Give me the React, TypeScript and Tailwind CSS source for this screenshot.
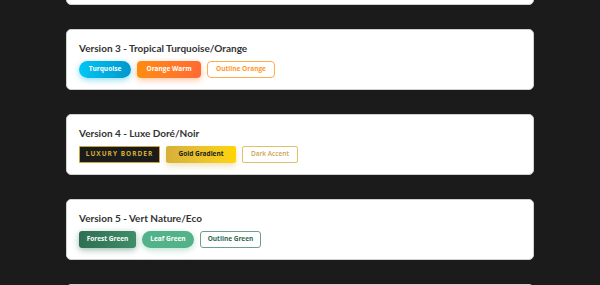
const font = { fontFamily: '"Open Sans", "Noto Sans", sans-serif' };
const titleFont = { fontFamily: 'Lato, "Open Sans", sans-serif' };

function Card({ title, children }: { title: string; children: React.ReactNode }) {
  return (
    <div className="bg-white rounded-[5px] border border-[#d0d0d0] px-[12px] pt-[11px] h-[61px]">
      <h3 className="text-[10px] leading-[14px] font-bold text-[#333333]" style={titleFont}>
        {title}
      </h3>
      <div className="flex gap-[6px] mt-[6px]">{children}</div>
    </div>
  );
}

const btn = "h-[17px] flex items-center justify-center text-[6.5px] font-bold leading-none";

export default function App() {
  return (
    <div className="h-[285px] bg-[#1b1b1b] overflow-hidden" style={font}>
      <div className="w-[468px] mx-auto -mt-[56px] flex flex-col gap-[24px]">
        <Card title="Version 2 - Bleu Océan">
          <button className={`${btn} px-[11px] rounded-[3px] bg-[#1e6fd9] text-white`}>Ocean Blue</button>
        </Card>

        <Card title="Version 3 - Tropical Turquoise/Orange">
          <button className={`${btn} w-[52px] rounded-full bg-gradient-to-r from-[#00c6f5] to-[#0098cc] text-white shadow-[0_2px_6px_rgba(0,180,230,0.45)]`}>
            Turquoise
          </button>
          <button className={`${btn} w-[64px] rounded-[4px] bg-gradient-to-r from-[#ff8c0a] to-[#ff6a33] text-white shadow-[0_2px_6px_rgba(255,120,40,0.45)]`}>
            Orange Warm
          </button>
          <button className={`${btn} w-[68px] rounded-[4px] border border-[#ffae4a] bg-white text-[#ff9a2a]`}>
            Outline Orange
          </button>
        </Card>

        <Card title="Version 4 - Luxe Doré/Noir">
          <button className={`${btn} w-[81px] rounded-[1px] border border-[#c9a43a] bg-[#1b1b1b] text-[#d4af37] tracking-[1px] uppercase`}>
            Luxury Border
          </button>
          <button className={`${btn} w-[70px] rounded-[2px] bg-gradient-to-r from-[#d6b03a] to-[#ffd500] text-[#1b1b1b] shadow-[0_3px_6px_rgba(212,175,55,0.35)]`}>
            Gold Gradient
          </button>
          <button className={`${btn} w-[56px] rounded-[2px] border border-[#e0c06a] bg-white text-[#c8a552] font-semibold`}>
            Dark Accent
          </button>
        </Card>

        <Card title="Version 5 - Vert Nature/Eco">
          <button className={`${btn} w-[57px] rounded-[3px] bg-gradient-to-r from-[#2e6f52] to-[#3f8d68] text-white shadow-[0_2px_6px_rgba(45,106,79,0.45)]`}>
            Forest Green
          </button>
          <button className={`${btn} w-[52px] rounded-full bg-[#52b38a] text-white shadow-[0_2px_6px_rgba(82,179,138,0.4)]`}>
            Leaf Green
          </button>
          <button className={`${btn} w-[61px] rounded-[3px] border border-[#6e9f8a] bg-white text-[#2d6a4f]`}>
            Outline Green
          </button>
        </Card>

        <Card title="Version 6 - Violet">
          <button className={`${btn} w-[60px] rounded-[3px] bg-[#7b3fe4] text-white`}>Violet</button>
        </Card>
      </div>
    </div>
  );
}
